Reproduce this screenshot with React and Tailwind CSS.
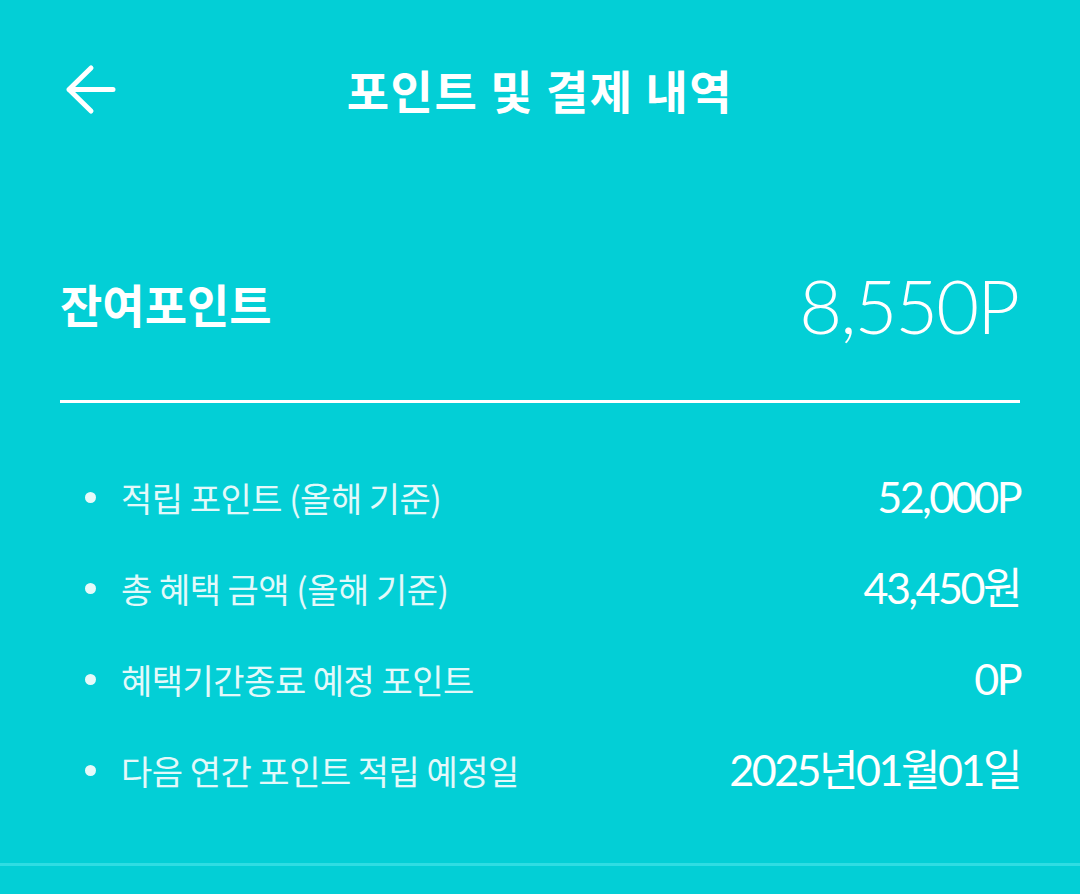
export default function App() {
  const rows = [
    ["적립 포인트 (올해 기준)", "52,000P"],
    ["총 혜택 금액 (올해 기준)", "43,450원"],
    ["혜택기간종료 예정 포인트", "0P"],
    ["다음 연간 포인트 적립 예정일", "2025년01월01일"],
  ];
  const kr = { fontFamily: "'Noto Sans CJK KR', sans-serif" };
  const num = { fontFamily: "Lato, 'Noto Sans CJK KR', sans-serif" };
  return (
    <div className="w-[1080px] h-[894px] bg-[#03cfd6] overflow-hidden text-white" style={kr}>
      <div className="relative h-[184px] flex items-center justify-center">
        <svg className="absolute left-[62px] top-[62px]" width="56" height="56" viewBox="0 0 56 56" fill="none">
          <path d="M29 6 L7 27.5 L29 49 M7 27.5 H51" stroke="white" strokeWidth="5" strokeLinecap="round" strokeLinejoin="round" />
        </svg>
        <div className="text-[46px] font-bold tracking-[1.5px] -mt-[6px]">포인트 및 결제 내역</div>
      </div>
      <div className="mx-[60px]">
        <div className="mt-[61px] h-[120px] flex items-center justify-between">
          <div className="text-[46px] font-bold -mt-[4px]">잔여포인트</div>
          <div className="text-[74px] font-light tracking-[-2px] pr-[2px]" style={num}>8,550P</div>
        </div>
        <div className="mt-[35px] h-[3px] bg-white" />
        <div className="mt-[49px]">
          {rows.map(([l, v]) => (
            <div key={l} className="h-[91px] flex items-center justify-between">
              <div className="flex items-center">
                <div className="w-[11px] h-[11px] rounded-full bg-[#e6fafa] ml-[25px] mr-[25px]" />
                <div className="text-[34px] text-[#e3f9fa] tracking-[-0.5px]">{l}</div>
              </div>
              <div className="text-[43px] tracking-[-2.5px]" style={num}>{v}</div>
            </div>
          ))}
        </div>
      </div>
      <div className="mt-[47px] h-[3px] bg-[#2fdde3]" />
    </div>
  );
}
